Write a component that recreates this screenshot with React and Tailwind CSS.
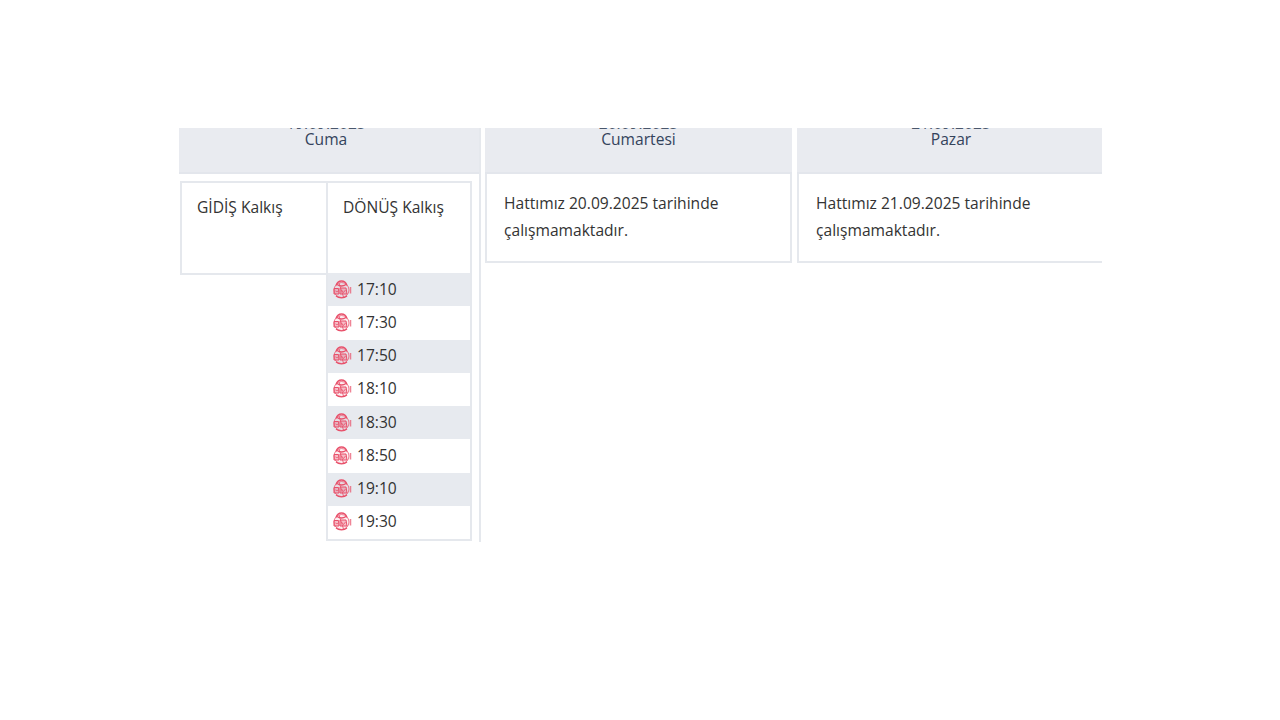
import React from "react";

const times = ["17:10", "17:30", "17:50", "18:10", "18:30", "18:50", "19:10", "19:30"];

function BusIcon() {
  return (
    <svg width="19" height="20" viewBox="0 0 19 20" fill="none" stroke="#e8506a" strokeWidth="1" className="shrink-0">
      <path d="M3 5.500c1-3 3-4.500 5.500-4.500s4.500 1.500 5.500 4.500" strokeWidth="1.300" />
      <circle cx="8.500" cy="10" r="7.500" strokeOpacity="0.75" fill="#e8506a" fillOpacity="0.1" />
      <path d="M4 4.500c3 2 6 2 9 0M3 16c3 2.600 8 2.600 11 0" strokeWidth="1.300" />
      <path d="M1 8.500h4.500l.5 5.500H1zM7 8h6l1 6H7z" fill="#e8506a" fillOpacity="0.3" />
      <path d="M2.500 11c1 .8 2 .8 3 0M8.500 10l2 2.500 2-2.500M6 3l4.500 14" strokeOpacity="0.8" />
      <path d="M17.500 7v6.500" strokeWidth="1.500" strokeOpacity="0.7" />
    </svg>
  );
}

function DayHeader({ date, day, shift = "" }) {
  return (
    <div className={"h-[46px] bg-[#e9ebf0] border-b-2 border-[#e3e6ec] overflow-hidden text-center text-[15.6px] leading-[20px] text-[#34435c] " + shift}>
      <div className="-mt-[10px] leading-[10px] text-[#4a576c]">{date}</div>
      <div className="mt-px">{day}</div>
    </div>
  );
}

function ClosedNote({ date }) {
  return (
    <div className="h-[89px] border-2 border-t-0 border-[#e5e8ed] pl-[17px] pt-[16px] text-[15.6px] leading-[27px] text-[#333333]">
      Hattımız {date} tarihinde
      <br />
      çalışmamaktadır.
    </div>
  );
}

export default function App() {
  return (
    <div className="min-h-[720px] bg-white pt-[128px] pl-[179px] [font-family:'Open_Sans',sans-serif]">
      <div className="flex w-[923px] h-[414px] overflow-hidden">
        <div className="w-[302px] shrink-0 border-r-2 border-[#e5e8ed]">
          <DayHeader date="19.09.2025" day="Cuma" shift="pr-[6px]" />
          <div className="flex pl-px pt-[7px] text-[15.6px] text-[#333333]">
            <div className="w-[148px] h-[94px] border-2 border-[#e5e8ed] pl-[15px] pt-[13px] leading-[22px]">
              GİDİŞ Kalkış
            </div>
            <div className="-ml-[2px] w-[146px]">
              <div className="h-[92px] border-2 border-b-0 border-[#e5e8ed] pl-[15px] pt-[13px] leading-[22px]">
                DÖNÜŞ Kalkış
              </div>
              <div className="border-2 border-t-0 border-[#e5e8ed]">
                {times.map((t, i) => (
                  <div
                    key={t}
                    className={"h-[33.25px] flex items-center gap-[5px] pl-[5px] " + (i % 2 === 0 ? "bg-[#e7eaef]" : "bg-white")}
                  >
                    <BusIcon />
                    <span className="leading-[20px] -translate-y-px">{t}</span>
                  </div>
                ))}
              </div>
            </div>
          </div>
        </div>
        <div className="w-[307px] shrink-0 ml-[4px]">
          <DayHeader date="20.09.2025" day="Cumartesi" />
          <ClosedNote date="20.09.2025" />
        </div>
        <div className="w-[310px] shrink-0 ml-[5px]">
          <DayHeader date="21.09.2025" day="Pazar" shift="pr-[2px]" />
          <ClosedNote date="21.09.2025" />
        </div>
      </div>
    </div>
  );
}
